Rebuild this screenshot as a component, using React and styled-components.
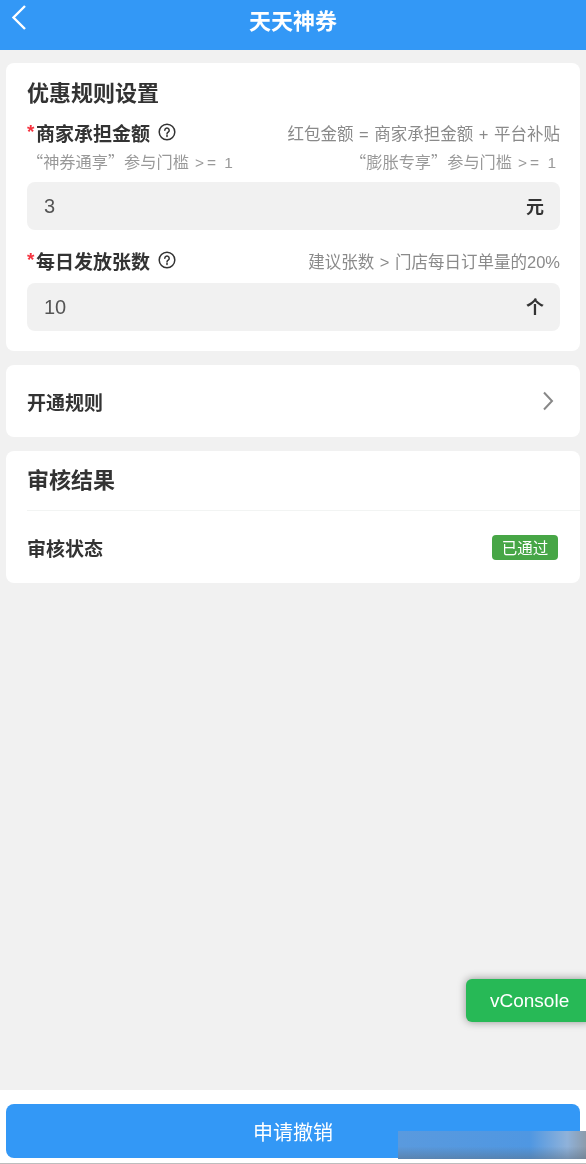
import React from "react";
import styled, { createGlobalStyle } from "styled-components";

const GlobalStyle = createGlobalStyle`
  html, body {
    margin: 0;
    padding: 0;
    background: #f1f1f1;
  }
  * {
    box-sizing: border-box;
  }
`;

const Page = styled.div`
  position: relative;
  width: 586px;
  height: 1164px;
  overflow: hidden;
  display: flex;
  flex-direction: column;
  background: #f1f1f1;
  color: #333;
  font-family: "Liberation Sans", "Noto Sans CJK SC", sans-serif;
  filter: blur(0.6px);
`;

const Header = styled.header`
  position: relative;
  flex: none;
  height: 50px;
  display: flex;
  align-items: center;
  justify-content: center;
  background: #3398f6;
  color: #fff;
  font-size: 22px;
  font-weight: 700;
  padding-bottom: 12px;
`;

const BackIcon = styled.svg`
  position: absolute;
  left: 10px;
  top: 4px;
  width: 18px;
  height: 27px;
`;

const Content = styled.main`
  flex: 1;
  display: flex;
  flex-direction: column;
  gap: 14px;
  padding: 13px 6px 0;
`;

const Card = styled.section`
  background: #fff;
  border-radius: 8px;
`;

const RulesCard = styled(Card)`
  height: 288px;
  padding: 16px 20px 0 21px;
`;

const Title = styled.h2`
  margin: 0;
  font-size: 22px;
  line-height: 30px;
  font-weight: 700;
  color: #333;
`;

const FieldHead = styled.div`
  display: flex;
  align-items: center;
  justify-content: space-between;
  height: 24px;
  margin-top: ${(p) => p.$top}px;
`;

const Label = styled.div`
  display: flex;
  align-items: center;
  font-size: 19px;
  font-weight: 700;
  color: #333;
`;

const Star = styled.span`
  width: 9px;
  color: #f5333f;
  font-weight: 700;
`;

const HelpIcon = styled.svg`
  width: 18px;
  height: 18px;
  margin-left: 8px;
`;

const Hint = styled.div`
  padding-top: 1px;
  font-size: 16.5px;
  word-spacing: 1px;
  color: #8a8a8a;
  white-space: nowrap;
`;

const SubHints = styled.div`
  display: flex;
  justify-content: space-between;
  height: 22px;
  margin-top: 6px;
  padding-right: 1px;
  font-family: "Noto Sans CJK SC", sans-serif;
  font-size: 16.2px;
  line-height: 22px;
  color: #999;
`;

const Threshold = styled.span`
  margin-left: 6px;
  font-family: "Liberation Sans", sans-serif;
  font-size: 15.5px;
  letter-spacing: 3px;
  word-spacing: -2px;
`;

const InputBox = styled.div`
  display: flex;
  align-items: center;
  justify-content: space-between;
  height: 48px;
  margin-top: ${(p) => p.$top}px;
  padding: 0 16px 0 17px;
  background: #f1f1f1;
  border-radius: 8px;
`;

const Value = styled.span`
  font-size: 20px;
  color: #555;
`;

const Unit = styled.span`
  padding-top: 2px;
  font-size: 18px;
  line-height: 24px;
  font-weight: 700;
  color: #333;
`;

const LinkCard = styled(Card)`
  height: 72px;
  display: flex;
  align-items: center;
  justify-content: space-between;
  padding: 0 25px 0 21px;
`;

const RowLabel = styled.span`
  font-size: 19px;
  font-weight: 700;
  color: #333;
`;

const ChevronIcon = styled.svg`
  width: 14px;
  height: 22px;
`;

const ResultCard = styled(Card)`
  height: 132px;
  padding-left: 21px;
`;

const ResultHead = styled.div`
  height: 60px;
  display: flex;
  align-items: center;
  border-bottom: 1px solid #f2f4f3;
`;

const ResultRow = styled.div`
  height: 72px;
  display: flex;
  align-items: center;
  justify-content: space-between;
  padding: 0 22px 0 0;
`;

const Badge = styled.span`
  height: 25px;
  width: 66px;
  display: flex;
  align-items: center;
  justify-content: center;
  background: #47a646;
  border-radius: 4px;
  color: #fff;
  font-size: 15.5px;
`;

const Footer = styled.footer`
  flex: none;
  height: 74px;
  padding: 14px 6px 0;
  background: #fff;
  border-bottom: 1px solid #bdbdbd;
`;

const CancelButton = styled.button`
  display: block;
  width: 100%;
  height: 54px;
  border: 0;
  border-radius: 8px;
  background: #3398f6;
  color: #fff;
  font-family: inherit;
  font-size: 20px;
`;

const ConsoleButton = styled.div`
  position: absolute;
  right: -6px;
  top: 979px;
  width: 126px;
  height: 43px;
  display: flex;
  align-items: center;
  padding-left: 24px;
  background: #27b956;
  border-radius: 6px;
  box-shadow: 0 0 8px rgba(0, 0, 0, 0.4);
  color: #fff;
  font-size: 19px;
`;

const Smudge = styled.div`
  position: absolute;
  right: 0;
  top: 1131px;
  width: 188px;
  height: 28px;
  background:
    linear-gradient(180deg, rgba(70, 110, 150, 0) 55%, rgba(90, 110, 130, 0.5) 100%),
    linear-gradient(90deg, #5a9ade 0%, #4f97e2 70%, #8fb2da 90%, #8c9bab 100%);
`;

function Help() {
  return (
    <HelpIcon viewBox="0 0 18 18" fill="none" stroke="#333" strokeWidth="1.5">
      <circle cx="9" cy="9" r="7.8" />
      <path d="M6.8 7.2a2.2 2.2 0 1 1 3.4 1.9c-.8.5-1.2 1-1.2 1.8" strokeLinecap="round" />
      <path d="M9 12.6v1" strokeLinecap="round" />
    </HelpIcon>
  );
}

export default function App() {
  return (
    <>
      <GlobalStyle />
      <Page>
        <Header>
          <BackIcon viewBox="0 0 18 27" fill="none" stroke="#fff" strokeWidth="2.4">
            <path d="M15 2 3.5 13.5 15 25" />
          </BackIcon>
          天天神券
        </Header>
        <Content>
          <RulesCard>
            <Title>优惠规则设置</Title>
            <FieldHead $top={11}>
              <Label>
                <Star>*</Star>商家承担金额
                <Help />
              </Label>
              <Hint>红包金额 = 商家承担金额 + 平台补贴</Hint>
            </FieldHead>
            <SubHints>
              <span>“神券通享”参与门槛<Threshold>&gt;= 1</Threshold></span>
              <span>“膨胀专享”参与门槛<Threshold>&gt;= 1</Threshold></span>
            </SubHints>
            <InputBox $top={10}>
              <Value>3</Value>
              <Unit>元</Unit>
            </InputBox>
            <FieldHead $top={18}>
              <Label>
                <Star>*</Star>每日发放张数
                <Help />
              </Label>
              <Hint>建议张数 &gt; 门店每日订单量的20%</Hint>
            </FieldHead>
            <InputBox $top={11}>
              <Value>10</Value>
              <Unit>个</Unit>
            </InputBox>
          </RulesCard>
          <LinkCard>
            <RowLabel>开通规则</RowLabel>
            <ChevronIcon viewBox="0 0 14 22" fill="none" stroke="#888" strokeWidth="2">
              <path d="M3 2.5 11 11 3 19.5" />
            </ChevronIcon>
          </LinkCard>
          <ResultCard>
            <ResultHead>
              <Title>审核结果</Title>
            </ResultHead>
            <ResultRow>
              <RowLabel>审核状态</RowLabel>
              <Badge>已通过</Badge>
            </ResultRow>
          </ResultCard>
        </Content>
        <Footer>
          <CancelButton>申请撤销</CancelButton>
        </Footer>
        <ConsoleButton>vConsole</ConsoleButton>
        <Smudge />
      </Page>
    </>
  );
}
